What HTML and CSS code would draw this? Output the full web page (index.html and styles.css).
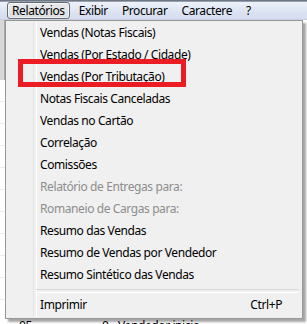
FILE: index.html
```html
<!DOCTYPE html>
<html lang="pt">
<head>
<meta charset="utf-8">
<link rel="stylesheet" href="styles.css">
</head>
<body>
<div class="screen">
  <div class="topline"></div>
  <nav class="menubar">
    <span class="mb-item active">Relatórios</span>
    <span class="mb-item">Exibir</span>
    <span class="mb-item">Procurar</span>
    <span class="mb-item">Caractere</span>
    <span class="mb-item">?</span>
  </nav>
  <div class="behind">
    <div class="behind-left">
      <div class="bl-top"></div>
      <div class="bl-bottom"></div>
    </div>
    <div class="behind-bottom"><span class="b1">05</span><span class="b2">0</span><span class="b3">Vendedor inicio</span></div>
  </div>

  <div class="popup">
    <ul class="items">
      <li class="item">Vendas (Notas Fiscais)</li>
      <li class="item">Vendas (Por Estado / Cidade)</li>
      <li class="item">Vendas (Por Tributação)</li>
      <li class="item">Notas Fiscais Canceladas</li>
      <li class="item">Vendas no Cartão</li>
      <li class="item">Correlação</li>
      <li class="item">Comissões</li>
      <li class="item disabled">Relatório de Entregas para:</li>
      <li class="item disabled">Romaneio de Cargas para:</li>
      <li class="item">Resumo das Vendas</li>
      <li class="item">Resumo de Vendas por Vendedor</li>
      <li class="item">Resumo Sintético das Vendas</li>
      <li class="sep"></li>
      <li class="item shortcut-item"><span>Imprimir</span><span class="shortcut">Ctrl+P</span></li>
    </ul>
  </div>
  <div class="highlight"></div>
</div>
</body>
</html>
```
FILE: styles.css
```css
* { box-sizing: border-box; }
html, body { margin: 0; padding: 0; }
body {
  width: 307px;
  height: 324px;
  overflow: hidden;
  font-family: "Noto Sans", "Segoe UI", sans-serif;
  font-size: 12px;
  letter-spacing: -0.4px;
  color: #000;
  background: #ffffff;
}
.screen {
  position: relative;
  width: 307px;
  height: 324px;
  overflow: hidden;
}
.topline {
  height: 2px;
  background: linear-gradient(#5b6470, #aab3c0);
}
.menubar {
  height: 18px;
  display: flex;
  align-items: center;
  padding-left: 7px;
  background: linear-gradient(#eef2f9, #dbe3f2 60%, #d5ddef);
  border-bottom: 1px solid #c8d0de;
}
.mb-item {
  padding: 0 4px;
  height: 17px;
  line-height: 15px;
  margin-right: 4px;
  border: 1px solid transparent;
  white-space: nowrap;
}
.mb-item.active {
  border-color: #676d76;
  border-radius: 3px;
  background: linear-gradient(#e9eaec, #dcdde0);
  box-shadow: inset 0 0 0 1px rgba(255,255,255,0.5);
}
.behind {
  height: 305px;
  display: flex;
  flex-direction: column;
}
.behind-left {
  width: 5px;
  flex: 1;
  display: flex;
  flex-direction: column;
}
.bl-top {
  height: 60px;
  background: #d8d8d8;
  border-right: 1px solid #a9a9a9;
}
.bl-bottom {
  flex: 1;
  background: repeating-linear-gradient(#ffffff 0 21px, #e4ecf4 21px 22px);
}
.behind-bottom {
  height: 6px;
  font-size: 12px;
  line-height: 14px;
  overflow: hidden;
  position: relative;
  background: #fff;
}
.behind-bottom span { position: absolute; top: 0; }
.b1 { left: 19px; }
.b2 { left: 102px; }
.b3 { left: 118px; }
.popup {
  position: absolute;
  left: 5px;
  top: 20px;
  width: 298px;
  height: 299px;
  background: #f0f0f0;
  border: 1px solid #979797;
  box-shadow: 3px 3px 2px rgba(0,0,0,0.35);
  padding: 1px 2px;
}
.popup::before {
  content: "";
  position: absolute;
  left: 27px;
  top: 1px;
  bottom: 1px;
  width: 2px;
  border-left: 1px solid #e2e3e3;
  border-right: 1px solid #ffffff;
}
.items {
  list-style: none;
  margin: 0;
  padding: 0;
  position: relative;
}
.item {
  height: 22px;
  line-height: 22px;
  padding-left: 32px;
  white-space: nowrap;
  color: #000;
}
.item.disabled { color: #8d8d8d; }
.sep {
  height: 8px;
  margin-left: 28px;
  margin-right: 1px;
  position: relative;
}
.sep::after {
  content: "";
  position: absolute;
  left: 0;
  right: 0;
  top: 3px;
  height: 2px;
  border-top: 1px solid #d7d7d7;
  border-bottom: 1px solid #ffffff;
}
.shortcut-item {
  display: flex;
  justify-content: space-between;
  padding-right: 18px;
}
.highlight {
  position: absolute;
  left: 18px;
  top: 59px;
  width: 168px;
  height: 28px;
  border: 5px solid #ec1c24;
}
```
